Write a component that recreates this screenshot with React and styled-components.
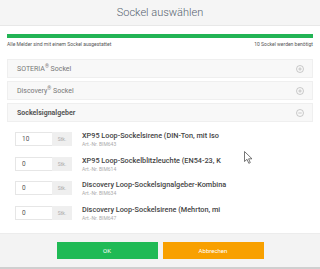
import styled, { createGlobalStyle } from "styled-components"

const GlobalStyle = createGlobalStyle`
  html, body { margin: 0; padding: 0; background: #fff; }
  body { font-family: Roboto, "Liberation Sans", sans-serif; }
`

const categories = [
    { name: "SOTERIA", reg: true, suffix: " Sockel", open: false },
    { name: "Discovery", reg: true, suffix: " Sockel", open: false },
    { name: "Sockelsignalgeber", reg: false, suffix: "", open: true },
]

const products = [
    { qty: 10, title: "XP95 Loop-Sockelsirene (DIN-Ton, mit Iso", art: "BIM643" },
    { qty: 0, title: "XP95 Loop-Sockelblitzleuchte (EN54-23, K", art: "BIM614" },
    { qty: 0, title: "Discovery Loop-Sockelsignalgeber-Kombina", art: "BIM634" },
    { qty: 0, title: "Discovery Loop-Sockelsirene (Mehrton, mi", art: "BIM647" },
]

const ToggleIcon = ({ open }) => (
    <svg width="8" height="8" viewBox="0 0 16 16">
        <circle cx="8" cy="8" r="7" fill="none" stroke="#b5b5b5" strokeWidth="1.4" />
        <line x1="4.5" y1="8" x2="11.5" y2="8" stroke="#b5b5b5" strokeWidth="1.4" />
        {!open && <line x1="8" y1="4.5" x2="8" y2="11.5" stroke="#b5b5b5" strokeWidth="1.4" />}
    </svg>
)

export default function App() {
    return (
        <Modal>
            <GlobalStyle />
            <Header>Sockel auswählen</Header>
            <Body>
                <Progress><ProgressFill style={{ width: "100%" }} /></Progress>
                <ProgressLabels>
                    <span>Alle Melder sind mit einem Sockel ausgestattet</span>
                    <span>10 Sockel werden benötigt</span>
                </ProgressLabels>
                <Accordion>
                    {categories.map(c => (
                        <Item key={c.name} $open={c.open}>
                            <span>{c.name}{c.reg && <sup>®</sup>}{c.suffix}</span>
                            <ToggleIcon open={c.open} />
                        </Item>
                    ))}
                </Accordion>
                <Products>
                    {products.map(p => (
                        <Row key={p.art}>
                            <QtyGroup>
                                <Qty>{p.qty}</Qty>
                                <Unit>Stk.</Unit>
                            </QtyGroup>
                            <Info>
                                <Title>{p.title}</Title>
                                <ArtNr>Art.-Nr. {p.art}</ArtNr>
                            </Info>
                        </Row>
                    ))}
                </Products>
                <Cursor width="9" height="13" viewBox="0 0 9 13">
                    <path d="M0.5 0.5 L0.5 10.5 L3 8.3 L4.8 12.3 L6.3 11.6 L4.6 7.8 L8 7.8 Z" fill="#fff" stroke="#555" strokeWidth="0.8" />
                </Cursor>
            </Body>
            <Footer>
                <Button $color="#1fba55">OK</Button>
                <Button $color="#f8a000">Abbrechen</Button>
            </Footer>
        </Modal>
    )
}

const Modal = styled.div`
display: flex;
flex-direction: column;
width: 320px;
height: 269px;
background: #fff;
overflow: hidden;
`

const Header = styled.div`
height: 25px;
flex-shrink: 0;
display: flex;
align-items: center;
justify-content: center;
background: #f5f5f5;
border-bottom: 1px solid #e8e8e8;
font-size: 11px;
font-weight: 300;
color: #56636f;
`

const Body = styled.div`
position: relative;
flex: 1;
padding: 8px 7px 0;
`

const Progress = styled.div`
height: 4px;
background: #e5e5e5;
`

const ProgressFill = styled.div`
height: 100%;
background: #22b455;
`

const ProgressLabels = styled.div`
display: flex;
justify-content: space-between;
margin-top: 3px;
font-size: 5px;
color: #555;
`

const Accordion = styled.div`
display: flex;
flex-direction: column;
gap: 3px;
margin-top: 12px;
`

const Item = styled.div`
height: 19px;
display: flex;
align-items: center;
justify-content: space-between;
padding: 0 8px 0 9px;
background: #f8f8f8;
border: 1px solid #efefef;
box-sizing: border-box;
font-size: 7px;
font-weight: ${p => p.$open ? 700 : 400};
color: ${p => p.$open ? "#555" : "#777"};
sup { font-size: 5px; line-height: 0; }
`

const Products = styled.div`
display: flex;
flex-direction: column;
padding: 5px 0 0 8px;
`

const Row = styled.div`
height: 24.5px;
display: flex;
align-items: center;
gap: 10px;
`

const QtyGroup = styled.div`
display: flex;
height: 14px;
width: 57px;
flex-shrink: 0;
`

const Qty = styled.div`
flex: 1;
display: flex;
align-items: center;
padding-left: 6px;
border: 1px solid #e6e6e6;
border-right: none;
font-size: 6.5px;
color: #555;
`

const Unit = styled.div`
width: 20px;
display: flex;
align-items: center;
justify-content: center;
background: #efefef;
font-size: 5px;
color: #aaa;
`

const Info = styled.div`
display: flex;
flex-direction: column;
gap: 1px;
white-space: nowrap;
`

const Title = styled.div`
font-size: 7.3px;
font-weight: 500;
color: #444;
`

const ArtNr = styled.div`
font-size: 5px;
color: #aaa;
`

const Cursor = styled.svg`
position: absolute;
left: 244px;
top: 125px;
`

const Footer = styled.div`
height: 33px;
flex-shrink: 0;
display: flex;
justify-content: center;
align-items: center;
gap: 5px;
background: #f3f3f3;
border-top: 1px solid #ececec;
border-bottom: 2px solid #cfcfcf;
`

const Button = styled.div`
width: 101px;
height: 17px;
display: flex;
align-items: center;
justify-content: center;
background: ${p => p.$color};
color: #fff;
font-size: 6px;
`
